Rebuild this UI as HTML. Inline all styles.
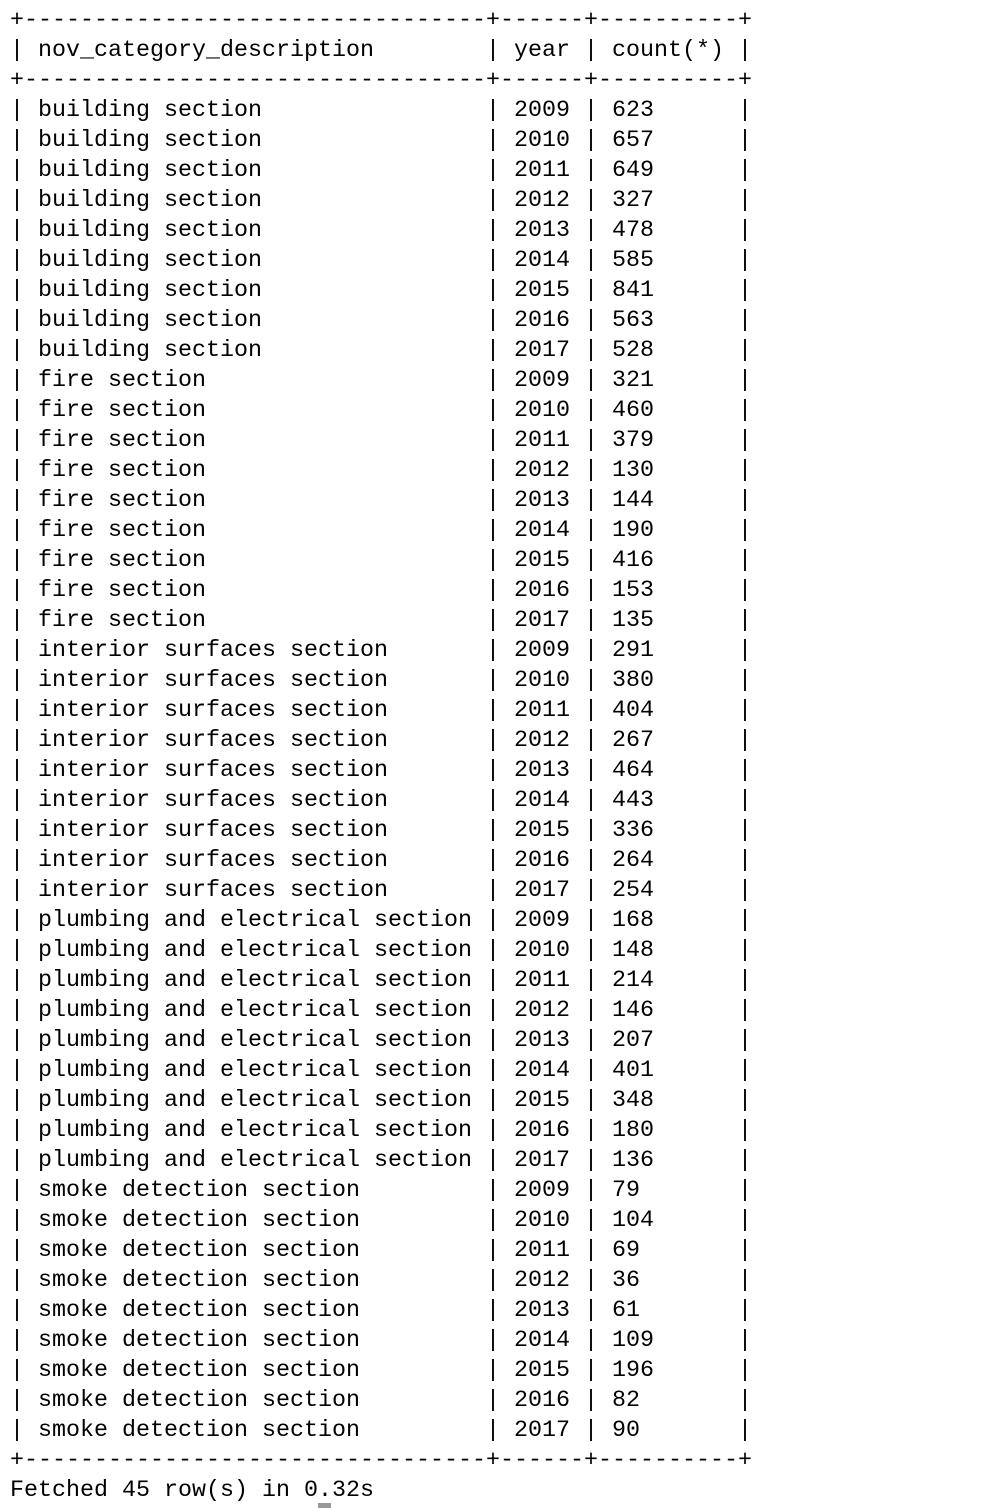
<!DOCTYPE html>
<html><head><meta charset="utf-8"><style>
html,body{margin:0;padding:0;background:#fff;width:1008px;height:1508px;overflow:hidden}
pre{position:absolute;left:10px;top:6px;margin:0;font-family:"Liberation Mono",monospace;font-size:23.33px;line-height:30px;color:#000;font-weight:500}
.cur{position:absolute;left:318px;top:1503px;width:13px;height:5px;background:#999}
</style></head><body>
<pre>+---------------------------------+------+----------+
| nov_category_description        | year | count(*) |
+---------------------------------+------+----------+
| building section                | 2009 | 623      |
| building section                | 2010 | 657      |
| building section                | 2011 | 649      |
| building section                | 2012 | 327      |
| building section                | 2013 | 478      |
| building section                | 2014 | 585      |
| building section                | 2015 | 841      |
| building section                | 2016 | 563      |
| building section                | 2017 | 528      |
| fire section                    | 2009 | 321      |
| fire section                    | 2010 | 460      |
| fire section                    | 2011 | 379      |
| fire section                    | 2012 | 130      |
| fire section                    | 2013 | 144      |
| fire section                    | 2014 | 190      |
| fire section                    | 2015 | 416      |
| fire section                    | 2016 | 153      |
| fire section                    | 2017 | 135      |
| interior surfaces section       | 2009 | 291      |
| interior surfaces section       | 2010 | 380      |
| interior surfaces section       | 2011 | 404      |
| interior surfaces section       | 2012 | 267      |
| interior surfaces section       | 2013 | 464      |
| interior surfaces section       | 2014 | 443      |
| interior surfaces section       | 2015 | 336      |
| interior surfaces section       | 2016 | 264      |
| interior surfaces section       | 2017 | 254      |
| plumbing and electrical section | 2009 | 168      |
| plumbing and electrical section | 2010 | 148      |
| plumbing and electrical section | 2011 | 214      |
| plumbing and electrical section | 2012 | 146      |
| plumbing and electrical section | 2013 | 207      |
| plumbing and electrical section | 2014 | 401      |
| plumbing and electrical section | 2015 | 348      |
| plumbing and electrical section | 2016 | 180      |
| plumbing and electrical section | 2017 | 136      |
| smoke detection section         | 2009 | 79       |
| smoke detection section         | 2010 | 104      |
| smoke detection section         | 2011 | 69       |
| smoke detection section         | 2012 | 36       |
| smoke detection section         | 2013 | 61       |
| smoke detection section         | 2014 | 109      |
| smoke detection section         | 2015 | 196      |
| smoke detection section         | 2016 | 82       |
| smoke detection section         | 2017 | 90       |
+---------------------------------+------+----------+
Fetched 45 row(s) in 0.32s</pre>
<div class="cur"></div>
</body></html>
